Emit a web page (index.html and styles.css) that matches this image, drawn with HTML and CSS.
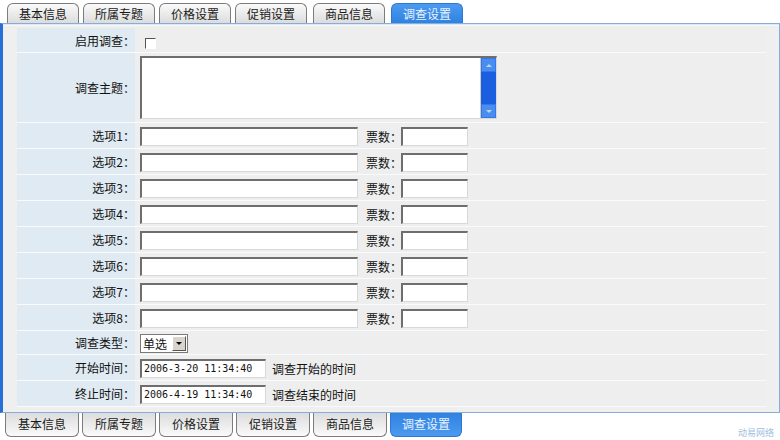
FILE: index.html
```html
<!DOCTYPE html>
<html lang="zh-CN">
<head>
  <meta charset="UTF-8">
  <title>调查设置</title>
  <link rel="stylesheet" href="styles.css">
</head>
<body>
  <div class="tabs top">
    <span class="tab">基本信息</span>
    <span class="tab">所属专题</span>
    <span class="tab">价格设置</span>
    <span class="tab">促销设置</span>
    <span class="tab">商品信息</span>
    <span class="tab active">调查设置</span>
  </div>

  <div class="panel">
    <table class="form">
      <tr class="row-check">
        <td class="label">启用调查：</td>
        <td class="value"><span class="checkbox"></span></td>
      </tr>
      <tr class="row-topic">
        <td class="label">调查主题：</td>
        <td class="value">
          <div class="memo">
            <textarea></textarea>
            <div class="scroll">
              <span class="btn up"></span>
              <span class="track"></span>
              <span class="btn down"></span>
            </div>
          </div>
        </td>
      </tr>
      <tbody id="options"></tbody>
      <tr class="row-type">
        <td class="label">调查类型：</td>
        <td class="value">
          <div class="select"><span class="sel-text">单选</span><span class="sel-btn"></span></div>
        </td>
      </tr>
      <tr class="row">
        <td class="label">开始时间：</td>
        <td class="value"><input class="txt date" type="text" value="2006-3-20 11:34:40"><span class="hint">调查开始的时间</span></td>
      </tr>
      <tr class="row">
        <td class="label">终止时间：</td>
        <td class="value"><input class="txt date" type="text" value="2006-4-19 11:34:40"><span class="hint">调查结束的时间</span></td>
      </tr>
    </table>
  </div>

  <div class="tabs bottom">
    <span class="tab">基本信息</span>
    <span class="tab">所属专题</span>
    <span class="tab">价格设置</span>
    <span class="tab">促销设置</span>
    <span class="tab">商品信息</span>
    <span class="tab active">调查设置</span>
  </div>

  <div class="brand">动易网络</div>

  <script>
    // 选项1 ~ 选项8 的输入行
    const corpo = document.getElementById("options");
    for (let i = 1; i <= 8; i++) {
      corpo.innerHTML += `<tr class="row">
        <td class="label">选项${i}：</td>
        <td class="value"><input class="txt item" type="text"><span class="votes">票数：</span><input class="txt num" type="text"></td>
      </tr>`;
    }
  </script>
</body>
</html>
```

FILE: styles.css
```css
body {
  margin: 0;
  background: #fff;
  font-family: "Noto Sans CJK SC", "Liberation Sans", sans-serif;
  font-size: 12px;
  color: #111;
  width: 780px;
  height: 440px;
  overflow: hidden;
  position: relative;
}
.tabs {
  display: flex;
  gap: 4px;
  padding-left: 7px;
}
.tabs.top {
  height: 20px;
  padding-top: 3px;
  align-items: flex-end;
}
.tabs.bottom {
  height: 25px;
  align-items: flex-start;
  padding-left: 5px;
  gap: 3px;
}
.tab {
  width: 70px;
  height: 19px;
  line-height: 19px;
  text-align: center;
  color: #1a1a1a;
  border: 1px solid #7c7c7c;
  background: linear-gradient(#fafafa, #dcdcdc);
  box-sizing: content-box;
}
.top .tab {
  border-bottom: none;
  border-radius: 6px 6px 0 0;
}
.top .tab:nth-child(5) {
  margin-left: 2px;
}
.top .tab.active {
  margin-left: 2px;
}
.bottom .tab {
  width: 72px;
  height: 23px;
  line-height: 22px;
  border-top: none;
  border-radius: 0 0 6px 6px;
  background: linear-gradient(#dcdcdc, #fafafa);
}
.tab.active {
  color: #eaf3ff;
  border-color: #2c76d4;
  background: linear-gradient(#4c9af0, #2f82e0);
}
.bottom .tab.active {
  width: 70px;
  background: linear-gradient(#2f82e0, #4c9af0);
}
.panel {
  height: 384px;
  border: 1px solid #86aedc;
  border-left: 3px solid #2a6fd8;
  background: #efefef;
  padding: 4px 13px 0 14px;
  box-sizing: content-box;
  box-shadow: inset 0 1px 0 #dde9f4, inset 0 2px 0 #f6f6f6;
}
.form {
  width: 100%;
  border-collapse: collapse;
}
.form td {
  padding: 0;
  border-bottom: 1px solid #f8fafb;
}
.label {
  width: 118px;
  text-align: right;
  background: #dfeaf2;
  white-space: nowrap;
}
.value {
  padding-left: 5px !important;
  background: #eeeeee;
  white-space: nowrap;
}
.row-check td {
  height: 24px;
}
.row-topic td {
  height: 69px;
}
.row td {
  height: 25px;
}
.row-type td {
  height: 23px;
}
.txt {
  height: 19px;
  box-sizing: border-box;
  border: 2px solid #fff;
  border-top-color: #6e6e6e;
  border-left-color: #6e6e6e;
  border-right: 1px solid #d8d8d8;
  border-bottom: 1px solid #d8d8d8;
  background: #fff;
  padding: 0 2px;
  vertical-align: middle;
  font-family: "DejaVu Sans Mono", "Liberation Mono", monospace;
  font-size: 10px;
  color: #111;
}
.item {
  width: 218px;
}
.num {
  width: 67px;
}
.date {
  width: 126px;
}
.votes {
  display: inline-block;
  margin: 0 -1px 0 8px;
  vertical-align: middle;
}
.hint {
  margin-left: 6px;
  vertical-align: middle;
}
.checkbox {
  display: inline-block;
  width: 9px;
  height: 9px;
  margin-left: 5px;
  margin-top: 3px;
  border: 1px solid #fff;
  border-top-color: #555;
  border-left-color: #555;
  background: #fff;
  vertical-align: middle;
}
.memo {
  display: flex;
  width: 357px;
  height: 63px;
  box-sizing: border-box;
  border: 2px solid #6e6e6e;
  border-right: 1px solid #d8d8d8;
  border-bottom: 1px solid #d8d8d8;
  background: #fff;
}
.memo textarea {
  flex: 1;
  border: none;
  resize: none;
  outline: none;
  padding: 0;
}
.scroll {
  width: 15px;
  display: flex;
  flex-direction: column;
  background: #1a5fe0;
  border-left: 1px solid #ccc;
}
.scroll .btn {
  height: 14px;
  background: #4a8df0;
  border: 1px solid #3477e8;
  box-sizing: border-box;
  position: relative;
}
.scroll .btn::after {
  content: "";
  position: absolute;
  left: 4px;
  top: 5px;
  border-left: 3px solid transparent;
  border-right: 3px solid transparent;
}
.scroll .up::after {
  border-bottom: 3px solid #bcd4f6;
}
.scroll .down::after {
  border-top: 3px solid #bcd4f6;
}
.scroll .track {
  flex: 1;
  background: #1a5fe0;
}
.select {
  display: inline-flex;
  align-items: center;
  width: 48px;
  height: 19px;
  box-sizing: border-box;
  border: 1px solid #7a7a7a;
  background: #fff;
  vertical-align: middle;
}
.sel-text {
  flex: 1;
  padding-left: 2px;
}
.sel-btn {
  width: 14px;
  height: 15px;
  margin-right: 1px;
  background: #d8d4cc;
  border: 1px solid #fff;
  border-right-color: #555;
  border-bottom-color: #555;
  box-sizing: border-box;
  position: relative;
}
.sel-btn::after {
  content: "";
  position: absolute;
  left: 3px;
  top: 5px;
  border-left: 3px solid transparent;
  border-right: 3px solid transparent;
  border-top: 3px solid #000;
}
.brand {
  position: absolute;
  right: 6px;
  bottom: 1px;
  font-size: 9px;
  color: #9fc0dc;
}
```
